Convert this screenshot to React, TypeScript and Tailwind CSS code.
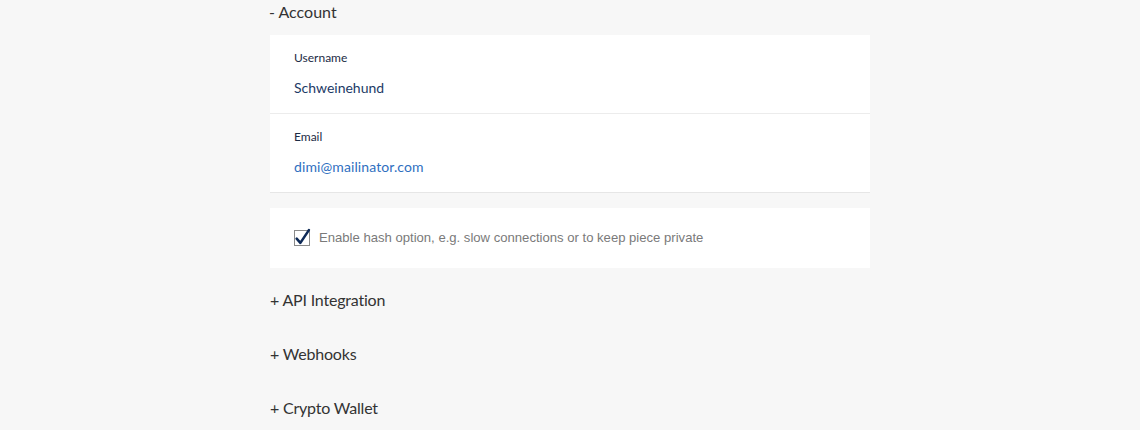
import React from "react";

const Field = ({ label, value, valueClass, border }: { label: string; value: string; valueClass: string; border?: boolean }) => (
    <div className={`px-6 pt-[15px] pb-[15px] ${border ? "border-b border-[#ececec]" : ""}`}>
        <div className="text-[12px] leading-4 text-[#1c2b45]">{label}</div>
        <div className={`mt-3 text-[14px] leading-5 ${valueClass}`}>{value}</div>
    </div>
);

const Section = ({ title }: { title: string }) => (
    <div className="text-[16px] leading-6 text-[#333] tracking-[-0.2px]">{title}</div>
);

const App = () => {
    return (
        <div className="w-[1140px] h-[430px] overflow-hidden bg-[#f7f7f7]" style={{ fontFamily: "Lato, 'Noto Sans', sans-serif" }}>
            <div className="w-[600px] ml-[270px]">
                <div className="text-[16px] leading-6 text-[#333] -ml-[1px]">- Account</div>

                <div className="mt-[11px] bg-white border-b border-[#e6e6e6]">
                    <Field label="Username" value="Schweinehund" valueClass="text-[#1c3a66]" border />
                    <Field label="Email" value="dimi@mailinator.com" valueClass="text-[#2f6fbf] tracking-[0.1px]" />
                </div>

                <div className="mt-[15px] h-[60px] bg-white px-6 flex items-center gap-[9px]">
                    <span className="relative w-4 h-4 border border-[#8a8a8a] bg-white shrink-0">
                        <svg viewBox="0 0 16 16" className="absolute -left-[1px] -top-[3px] w-[17px] h-[18px]">
                            <path d="M2.5 9.5 L6 13.5 L14 1.5" fill="none" stroke="#0e2a57" strokeWidth="2.4" strokeLinecap="round" strokeLinejoin="round" />
                        </svg>
                    </span>
                    <span className="text-[13.1px] text-[#7a7a7a]" style={{ fontFamily: "'Liberation Sans', Arial, sans-serif" }}>
                        Enable hash option, e.g. slow connections or to keep piece private
                    </span>
                </div>

                <div className="pt-5 flex flex-col gap-[30px]">
                    <Section title="+ API Integration" />
                    <Section title="+ Webhooks" />
                    <Section title="+ Crypto Wallet" />
                </div>
            </div>
        </div>
    );
};

export default App;
